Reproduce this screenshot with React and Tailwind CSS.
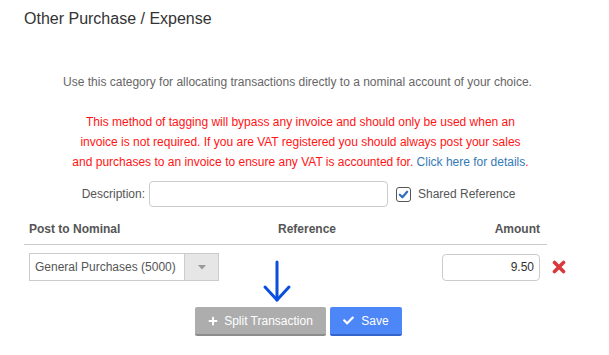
import React from "react";
import { FaCheck, FaPlus } from "react-icons/fa";

export default function App() {
  return (
    <div
      className="relative w-[609px] h-[355px] bg-white overflow-hidden text-[12px] text-[#555]"
      style={{ fontFamily: '"Liberation Sans", Arial, sans-serif' }}
    >
      <div className="pt-[9px] pl-[24px] text-[16px] leading-5 text-[#333]">
        Other Purchase / Expense
      </div>

      <div className="mt-[43px] text-center leading-5 text-[#666] pr-[14px]">
        Use this category for allocating transactions directly to a nominal account of your choice.
      </div>

      <div className="mt-[20px] text-center leading-5 text-[#ff1414] pr-[8px]">
        This method of tagging will bypass any invoice and should only be used when an
        <br />
        invoice is not required. If you are VAT registered you should always post your sales
        <br />
        and purchases to an invoice to ensure any VAT is accounted for.{" "}
        <span className="text-[#337ab7]">Click here for details</span>.
      </div>

      <div className="mt-[9px] flex items-center pl-[24px]">
        <div className="w-[121px] text-right text-[#555]">Description:</div>
        <div className="ml-[4px] w-[239px] h-[26px] border border-[#ccc] rounded-[4px] bg-white" />
        <div className="ml-[8px] w-[15px] h-[15px] border border-[#555] rounded-[3px] flex items-center justify-center">
          <svg width="11" height="11" viewBox="0 0 12 12">
            <path d="M2 6.2 L4.8 9 L10 3" fill="none" stroke="#2f6fbf" strokeWidth="2.4" strokeLinecap="round" strokeLinejoin="round" />
          </svg>
        </div>
        <div className="ml-[7px] text-[#555]">Shared Reference</div>
      </div>

      <div className="mt-[12px] ml-[24px] w-[523px] border-b border-[#ccc] pb-[5px] grid grid-cols-[190px_176px_1fr] pl-[5px] pr-[7px] leading-5 font-bold text-[#555]">
        <div>Post to Nominal</div>
        <div className="text-center">Reference</div>
        <div className="text-right">Amount</div>
      </div>

      <div className="mt-[8px] flex items-center pl-[29px]">
        <div className="w-[190px] h-[28px] border border-[#ccc] flex bg-white">
          <div className="flex-1 flex items-center pl-[5px] text-[#555]">General Purchases (5000)</div>
          <div className="w-[34px] bg-[#e6e6e6] border-l border-[#ccc] flex items-center justify-center">
            <svg width="8" height="5" viewBox="0 0 8 5">
              <path d="M0 0 H8 L4 4.5 Z" fill="#999" />
            </svg>
          </div>
        </div>
        <div className="ml-[223px] w-[98px] h-[27px] border border-[#ccc] rounded-[4px] flex items-center justify-end pr-[5px] text-[#333]">
          9.50
        </div>
        <svg className="ml-[12px]" width="14" height="14" viewBox="0 0 14 14">
          <path d="M2.5 2.5 L11.5 11.5 M11.5 2.5 L2.5 11.5" stroke="#d9393b" strokeWidth="3.6" strokeLinecap="round" fill="none" />
        </svg>
      </div>

      <div className="mt-[26px] flex pl-[195px] gap-[4px]">
        <div className="w-[131px] h-[29px] bg-[#adadad] border-b-2 border-[#8c8c8c] rounded-[2px] flex items-center justify-center text-white text-[12px] gap-[6px]">
          <FaPlus className="w-[10px] h-[10px]" />
          <span>Split Transaction</span>
        </div>
        <div className="w-[72px] h-[29px] bg-[#4d86f7] border-b-2 border-[#3366cc] rounded-[2px] flex items-center justify-center text-white text-[12px] gap-[7px]">
          <FaCheck className="w-[11px] h-[11px]" />
          <span>Save</span>
        </div>
      </div>

      <svg
        className="absolute left-[262px] top-[258px]"
        width="30"
        height="46"
        viewBox="0 0 30 46"
      >
        <path d="M15 4 V42" stroke="#0a4ee0" strokeWidth="3" strokeLinecap="round" fill="none" />
        <path d="M3 29 L15 42 L27 29" stroke="#0a4ee0" strokeWidth="3" strokeLinecap="round" strokeLinejoin="round" fill="none" />
      </svg>
    </div>
  );
}
